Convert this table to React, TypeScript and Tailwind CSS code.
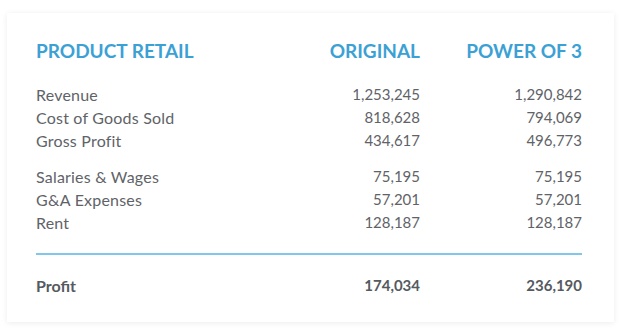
const rows1 = [
  ["Revenue", "1,253,245", "1,290,842"],
  ["Cost of Goods Sold", "818,628", "794,069"],
  ["Gross Profit", "434,617", "496,773"],
];

const rows2 = [
  ["Salaries & Wages", "75,195", "75,195"],
  ["G&A Expenses", "57,201", "57,201"],
  ["Rent", "128,187", "128,187"],
];

const Row = ({ r }: { r: string[] }) => (
  <div className="flex h-[23px] items-center">
    <div className="flex-1 text-[16px] tracking-[0.2px]">{r[0]}</div>
    <div className="w-[140px] text-right">{r[1]}</div>
    <div className="w-[162px] text-right">{r[2]}</div>
  </div>
);

const App = () => {
  return (
    <div className="h-[336px] w-[624px] bg-white pl-[7px] pt-[13px] font-['Lato',sans-serif]">
      <div className="h-[309px] w-[607px] bg-white pl-[29px] pr-[32px] pt-[26px] shadow-[0_1px_6px_rgba(0,0,0,0.08)]">
        {/* header */}
        <div className="flex h-[24px] items-center text-[19px] font-bold text-[#3ba1d5]">
          <div className="flex-1">PRODUCT RETAIL</div>
          <div className="w-[140px] text-right">ORIGINAL</div>
          <div className="w-[162px] text-right">POWER OF 3</div>
        </div>

        <div className="mt-[20px] text-[15px] text-[#5f6368]">
          {rows1.map((r) => (
            <Row key={r[0]} r={r} />
          ))}
          <div className="h-[13px]"></div>
          {rows2.map((r) => (
            <Row key={r[0]} r={r} />
          ))}
        </div>

        <div className="mt-[19px] h-[2px] bg-[#82c6ea]"></div>

        <div className="mt-[19px] flex h-[23px] items-center text-[15px] font-bold text-[#555a5f]">
          <div className="flex-1 text-[16px]">Profit</div>
          <div className="w-[140px] text-right">174,034</div>
          <div className="w-[162px] text-right">236,190</div>
        </div>
      </div>
    </div>
  );
};

export default App;
